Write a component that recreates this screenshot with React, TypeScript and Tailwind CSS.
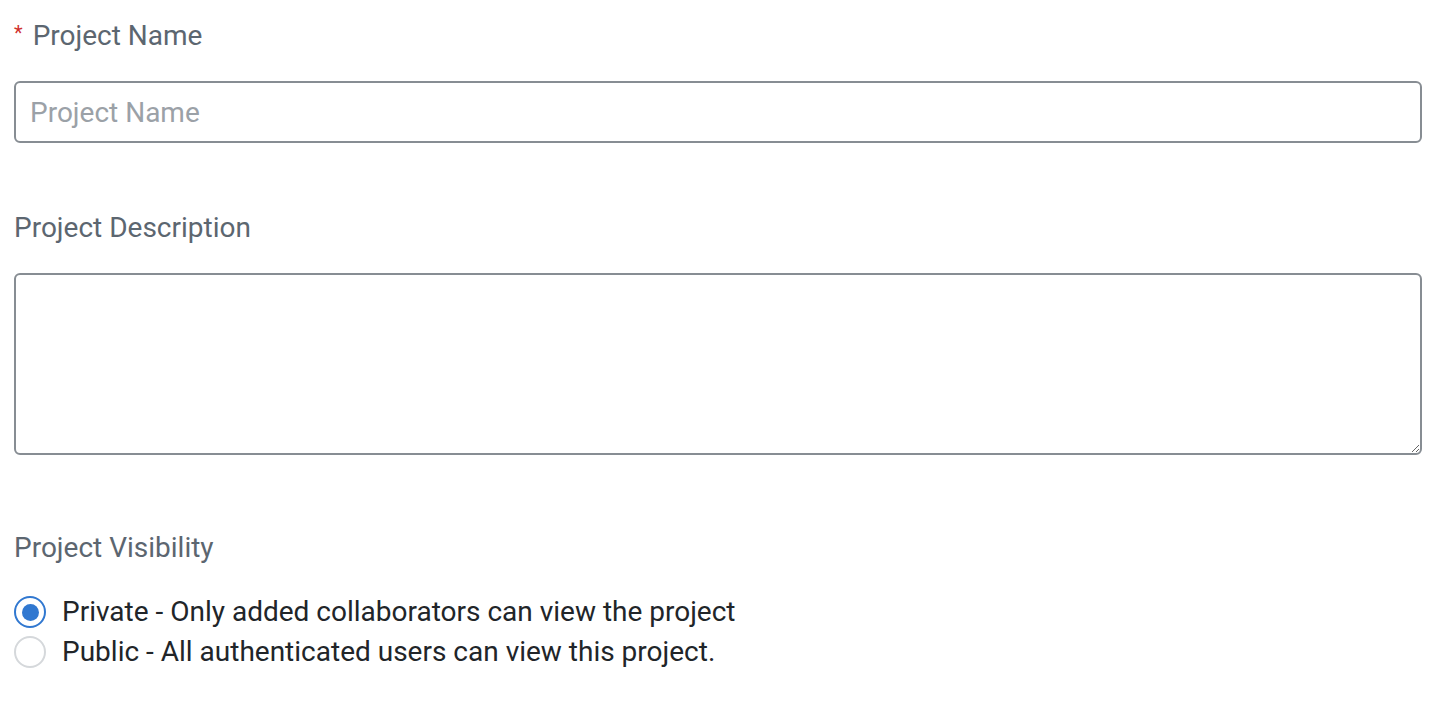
export default function App() {
  return (
    <div
      className="min-h-screen bg-white pl-[14px] pr-[18px] pt-[16px]"
      style={{ fontFamily: "Roboto, 'Liberation Sans', sans-serif" }}
    >
      {/* Project name */}
      <label className="flex h-[40px] items-center text-[28px] text-[#5c6670]">
        <span className="mr-[10px] -mt-[6px] text-[20px] text-[#d0312d]">*</span>
        Project Name
      </label>
      <input
        type="text"
        placeholder="Project Name"
        className="mt-[25px] block h-[62px] w-full rounded-[6px] border-2 border-[#878d93] px-[14px] text-[28px] text-[#212529] outline-none placeholder:text-[#9ba1a7]"
      />

      {/* Description */}
      <label className="mt-[65px] flex h-[40px] items-center text-[28px] text-[#5c6670]">
        Project Description
      </label>
      <textarea className="mt-[25px] block h-[182px] w-full rounded-[6px] border-2 border-[#878d93] px-[14px] py-[10px] text-[28px] outline-none" />

      {/* Visibility */}
      <label className="mt-[73px] flex h-[40px] items-center text-[28px] text-[#5c6670]">
        Project Visibility
      </label>
      <div className="mt-[24px] flex flex-col">
        <div className="flex h-[40px] items-center gap-[16px]">
          <span className="flex h-[32px] w-[32px] items-center justify-center rounded-full border-2 border-[#3178d0]">
            <span className="h-[17px] w-[17px] rounded-full bg-[#3178d0]" />
          </span>
          <span className="text-[28px] text-[#212529]">Private - Only added collaborators can view the project</span>
        </div>
        <div className="flex h-[40px] items-center gap-[16px]">
          <span className="h-[32px] w-[32px] rounded-full border-2 border-[#d5d8db]" />
          <span className="text-[28px] text-[#212529]">Public - All authenticated users can view this project.</span>
        </div>
      </div>
    </div>
  );
}
